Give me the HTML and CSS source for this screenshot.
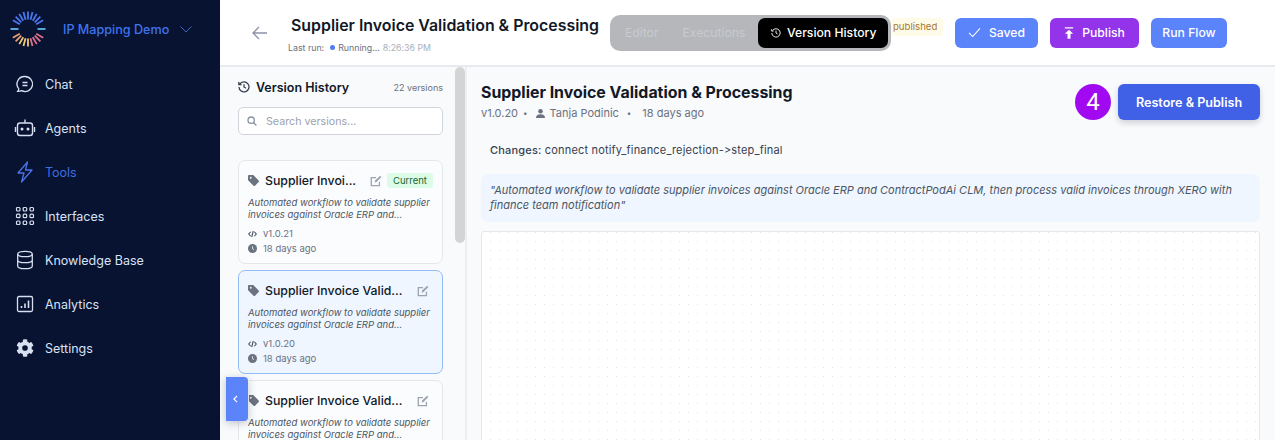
FILE: index.html
```html
<!DOCTYPE html>
<html lang="en">
<head>
<meta charset="utf-8">
<title>Version History</title>
<link rel="stylesheet" href="styles.css">
</head>
<body>
<div class="app">
  <aside class="sidebar">
    <div class="brand">
      <svg class="logo" viewBox="0 0 36 36" width="36" height="36" fill="none" stroke-width="1.800">
        <g stroke="#4a78f0">
          <path d="M18 .5v8"/>
          <path d="M18 .5v8" transform="rotate(15 18 18)"/>
          <path d="M18 .5v8" transform="rotate(30 18 18)"/>
          <path d="M18 .5v8" transform="rotate(45 18 18)"/>
          <path d="M18 .5v8" transform="rotate(60 18 18)"/>
          <path d="M18 .5v8" transform="rotate(-15 18 18)"/>
          <path d="M18 .5v8" transform="rotate(-30 18 18)"/>
          <path d="M18 .5v8" transform="rotate(-45 18 18)"/>
          <path d="M18 .5v8" transform="rotate(-60 18 18)"/>
        </g>
        <g stroke="#5fb6f0">
          <path d="M18 .5v8" transform="rotate(90 18 18)"/>
          <path d="M18 .5v8" transform="rotate(-90 18 18)"/>
        </g>
        <g stroke="#e8a07a">
          <path d="M18 .5v8" transform="rotate(-120 18 18)"/>
          <path d="M18 .5v8" transform="rotate(-135 18 18)"/>
        </g>
        <g stroke="#f0c878">
          <path d="M18 .5v8" transform="rotate(-150 18 18)"/>
          <path d="M18 .5v8" transform="rotate(-165 18 18)"/>
          <path d="M18 .5v8" transform="rotate(180 18 18)"/>
        </g>
        <g stroke="#e0708a">
          <path d="M18 .5v8" transform="rotate(165 18 18)"/>
          <path d="M18 .5v8" transform="rotate(150 18 18)"/>
          <path d="M18 .5v8" transform="rotate(135 18 18)"/>
          <path d="M18 .5v8" transform="rotate(120 18 18)"/>
        </g>
      </svg>
      <span class="brand-name">IP Mapping Demo</span>
      <svg class="chev" viewBox="0 0 12 7" width="12" height="7" fill="none" stroke="#3f63b8" stroke-width="1"><path d="M.5.5 6 6l5.500-5.500"/></svg>
    </div>
    <nav class="nav">
      <a class="nav-item"><svg viewBox="0 0 20 20" width="20" height="20" fill="none" stroke="#d7e0f0" stroke-width="1.300"><path d="M10 2.500a7.500 7.500 0 1 1-3.300 14.200c-1.300.6-2.700.8-4 .7.700-.8 1-1.700 1-2.700A7.500 7.500 0 0 1 10 2.500z"/><path d="M7.500 8.500h5M7.500 11.500h5"/></svg><span>Chat</span></a>
      <a class="nav-item"><svg viewBox="0 0 22 22" width="22" height="22" fill="none" stroke="#d7e0f0" stroke-width="1.400"><rect x="3.500" y="6" width="15" height="12.500" rx="2.500"/><path d="M11 6V2.500M1.500 10v5M20.500 10v5"/><circle cx="8" cy="12" r=".8" fill="#d7e0f0"/><circle cx="14" cy="12" r=".8" fill="#d7e0f0"/></svg><span>Agents</span></a>
      <a class="nav-item active"><svg viewBox="0 0 20 22" width="20" height="22" fill="none" stroke="#4a73e8" stroke-width="1.300" stroke-linejoin="round"><path d="M12.500 1 3 12h6l-2.500 9L17 9h-6.500z"/></svg><span>Tools</span></a>
      <a class="nav-item"><svg viewBox="0 0 20 20" width="20" height="20" fill="none" stroke="#d7e0f0" stroke-width="1.200"><rect x="1.500" y="1.500" width="3.500" height="3.500" rx="1"/><rect x="8.200" y="1.500" width="3.500" height="3.500" rx="1"/><rect x="15" y="1.500" width="3.500" height="3.500" rx="1"/><rect x="1.500" y="8.200" width="3.500" height="3.500" rx="1"/><rect x="8.200" y="8.200" width="3.500" height="3.500" rx="1"/><rect x="15" y="8.200" width="3.500" height="3.500" rx="1"/><rect x="1.500" y="15" width="3.500" height="3.500" rx="1"/><rect x="8.200" y="15" width="3.500" height="3.500" rx="1"/><rect x="15" y="15" width="3.500" height="3.500" rx="1"/></svg><span>Interfaces</span></a>
      <a class="nav-item"><svg viewBox="0 0 20 20" width="20" height="20" fill="none" stroke="#d7e0f0" stroke-width="1.300"><ellipse cx="10" cy="4" rx="7.300" ry="2.700"/><path d="M2.700 4v12c0 1.500 3.300 2.700 7.300 2.700s7.300-1.200 7.300-2.700V4M2.700 10c0 1.500 3.300 2.700 7.300 2.700s7.300-1.200 7.300-2.700"/></svg><span>Knowledge Base</span></a>
      <a class="nav-item"><svg viewBox="0 0 20 20" width="20" height="20" fill="none" stroke="#d7e0f0" stroke-width="1.300"><rect x="2.500" y="2.500" width="15" height="15" rx="1.500"/><path d="M6.500 14v-2M10 14V9.500M13.500 14V6.500" stroke-width="1.600"/></svg><span>Analytics</span></a>
      <a class="nav-item"><svg viewBox="0 0 512 512" width="18" height="18" fill="#d7e0f0"><path d="M487 316l-42-25a190 190 0 0 0 0-70l42-25c5-3 7-9 6-14-11-35-30-67-54-93-4-4-10-5-15-2l-42 24a188 188 0 0 0-61-35V28c0-6-4-11-9-12a224 224 0 0 0-108 0c-5 1-9 6-9 12v48c-23 8-43 20-61 35L92 87c-5-3-11-2-15 2-24 26-43 58-54 93-2 5 1 11 6 14l42 25a190 190 0 0 0 0 70l-42 25c-5 3-7 9-6 14 11 35 30 67 54 93 4 4 10 5 15 2l42-24c18 15 38 27 61 35v48c0 6 4 11 9 12 36 8 73 8 108 0 5-1 9-6 9-12v-48c23-8 43-20 61-35l42 24c5 3 11 2 15-2 24-26 43-58 54-93 2-5-1-11-6-14zM256 336a80 80 0 1 1 0-160 80 80 0 0 1 0 160z"/></svg><span>Settings</span></a>
    </nav>
  </aside>
  <div class="content">
    <header class="topbar">
      <svg class="back" viewBox="0 0 16 14" width="16" height="14" fill="none" stroke="#8a92a6" stroke-width="1.300"><path d="M15 7H1.500M7 1 1 7l6 6"/></svg>
      <div class="title-block">
        <h1>Supplier Invoice Validation &amp; Processing</h1>
        <div class="last-run"><span>Last run:</span><i class="dot"></i><span>Running...</span><span class="time">8:26:36 PM</span></div>
      </div>
      <div class="tabs">
        <span class="tab">Editor</span>
        <span class="tab">Executions</span>
        <span class="tab tab-on"><svg viewBox="0 0 12 12" width="10" height="10" fill="none" stroke="#fff" stroke-width="1.100"><path d="M1.800 3.200A5 5 0 1 1 1 6M.8 1.500v2.200H3M6 3.200V6l2 1.200"/></svg>Version History</span>
      </div>
      <span class="pub-badge">published</span>
      <div class="actions">
        <button class="btn blue saved"><svg viewBox="0 0 14 12" width="13" height="11" fill="none" stroke="#fff" stroke-width="1.100"><path d="M1 6.500 5 10.500 13 1.500"/></svg>Saved</button>
        <button class="btn purple publish"><svg viewBox="0 0 12 14" width="10" height="12" fill="#fff"><path d="M1 0h10v1.600H1zM6 3l5 5H7.800v6H4.200V8H1z"/></svg>Publish</button>
        <button class="btn blue run">Run Flow</button>
      </div>
    </header>
    <div class="body">
      <section class="history">
        <div class="history-inner">
          <div class="history-head">
            <h2><svg viewBox="0 0 12 12" width="12" height="12" fill="none" stroke="#374151" stroke-width="1.300"><path d="M1.800 3.200A5 5 0 1 1 1 6M.8 1v2.700H3.500M6 3.200V6l2 1.200"/></svg>Version History</h2>
            <span class="count">22 versions</span>
          </div>
          <div class="search">
            <svg viewBox="0 0 12 12" width="10" height="10" fill="none" stroke="#8b93a3" stroke-width="1.600"><circle cx="5" cy="5" r="3.800"/><path d="m8 8 3.300 3.300"/></svg>
            <span>Search versions...</span>
          </div>
          <div class="cards">
            <article class="card">
              <div class="card-top">
                <svg class="tag" viewBox="0 0 12 12" width="11" height="11" fill="#6b7280"><path d="M0 1.200C0 .5.500 0 1.200 0h4c.3 0 .6.100.8.400l5.600 5.600c.5.500.5 1.200 0 1.700l-3.900 3.900c-.5.500-1.200.5-1.700 0L.4 6C.1 5.800 0 5.500 0 5.200zM3 4a1 1 0 1 0 0-2 1 1 0 0 0 0 2z"/></svg>
                <span class="card-title short">Supplier Invoi...</span>
                <svg class="edit" viewBox="0 0 14 14" width="12" height="12" fill="none" stroke="#9ca3af" stroke-width="1.500"><path d="M11 8v4.500H1.500V3H7"/><path d="M5.500 9 6 6.500 11.800 .9l1.500 1.500L7.600 8.300z" fill="#9ca3af" stroke="none"/></svg>
                <span class="current">Current</span>
              </div>
              <p class="desc">Automated workflow to validate supplier invoices against Oracle ERP and...</p>
              <div class="meta"><svg viewBox="0 0 12 10" width="9" height="8" fill="none" stroke="#4b5563" stroke-width="1.500"><path d="M3.500 2 1 5l2.500 3M8.500 2 11 5 8.500 8M7 1 5 9"/></svg><span>v1.0.21</span></div>
              <div class="meta"><svg viewBox="0 0 12 12" width="9" height="9"><circle cx="6" cy="6" r="6" fill="#6b7280"/><path d="M6 3v3.300l2 1.200" fill="none" stroke="#fbfcfe" stroke-width="1.100"/></svg><span>18 days ago</span></div>
            </article>
            <article class="card selected">
              <div class="card-top">
                <svg class="tag" viewBox="0 0 12 12" width="11" height="11" fill="#6b7280"><path d="M0 1.200C0 .5.500 0 1.200 0h4c.3 0 .6.100.8.400l5.600 5.600c.5.500.5 1.200 0 1.700l-3.900 3.900c-.5.500-1.200.5-1.700 0L.4 6C.1 5.800 0 5.500 0 5.200zM3 4a1 1 0 1 0 0-2 1 1 0 0 0 0 2z"/></svg>
                <span class="card-title">Supplier Invoice Valid...</span>
                <svg class="edit" viewBox="0 0 14 14" width="12" height="12" fill="none" stroke="#9ca3af" stroke-width="1.500"><path d="M11 8v4.500H1.500V3H7"/><path d="M5.500 9 6 6.500 11.800 .9l1.500 1.500L7.600 8.300z" fill="#9ca3af" stroke="none"/></svg>
              </div>
              <p class="desc">Automated workflow to validate supplier invoices against Oracle ERP and...</p>
              <div class="meta"><svg viewBox="0 0 12 10" width="9" height="8" fill="none" stroke="#4b5563" stroke-width="1.500"><path d="M3.500 2 1 5l2.500 3M8.500 2 11 5 8.500 8M7 1 5 9"/></svg><span>v1.0.20</span></div>
              <div class="meta"><svg viewBox="0 0 12 12" width="9" height="9"><circle cx="6" cy="6" r="6" fill="#6b7280"/><path d="M6 3v3.300l2 1.200" fill="none" stroke="#eff6ff" stroke-width="1.100"/></svg><span>18 days ago</span></div>
            </article>
            <article class="card">
              <div class="card-top">
                <svg class="tag" viewBox="0 0 12 12" width="11" height="11" fill="#6b7280"><path d="M0 1.200C0 .5.500 0 1.200 0h4c.3 0 .6.100.8.400l5.600 5.600c.5.500.5 1.200 0 1.700l-3.900 3.900c-.5.500-1.200.5-1.700 0L.4 6C.1 5.800 0 5.500 0 5.200zM3 4a1 1 0 1 0 0-2 1 1 0 0 0 0 2z"/></svg>
                <span class="card-title">Supplier Invoice Valid...</span>
                <svg class="edit" viewBox="0 0 14 14" width="12" height="12" fill="none" stroke="#9ca3af" stroke-width="1.500"><path d="M11 8v4.500H1.500V3H7"/><path d="M5.500 9 6 6.500 11.800 .9l1.500 1.500L7.600 8.300z" fill="#9ca3af" stroke="none"/></svg>
              </div>
              <p class="desc">Automated workflow to validate supplier invoices against Oracle ERP and...</p>
            </article>
          </div>
        </div>
        <div class="scrollbar"><div class="thumb"></div></div>
      </section>
      <main class="detail">
        <div class="detail-head">
          <div>
            <h2 class="detail-title">Supplier Invoice Validation &amp; Processing</h2>
            <div class="detail-meta"><span class="ver">v1.0.20</span><b>•</b><svg viewBox="0 0 12 12" width="9" height="9" fill="#6b7280"><circle cx="6" cy="3" r="3"/><path d="M0 12c0-3.500 2-5 6-5s6 1.500 6 5z"/></svg><span>Tanja Podinic</span><b>•</b><span>18 days ago</span></div>
          </div>
          <div class="restore-wrap">
            <span class="step">4</span>
            <button class="restore">Restore &amp; Publish</button>
          </div>
        </div>
        <p class="changes"><strong>Changes:</strong> connect notify_finance_rejection-&gt;step_final</p>
        <div class="quote">"Automated workflow to validate supplier invoices against Oracle ERP and ContractPodAi CLM, then process valid invoices through XERO with finance team notification"</div>
        <div class="canvas"></div>
      </main>
    </div>
  </div>
</div>
<button class="collapse" aria-label="Collapse"><svg viewBox="0 0 6 10" width="5" height="8" fill="none" stroke="#fff" stroke-width="1.500"><path d="M5 1 1 5l4 4"/></svg></button>
</body>
</html>
```
FILE: styles.css
```css
* { box-sizing: border-box; }
html, body { margin: 0; height: 100%; overflow: hidden; }
body { font-family: Inter, "Noto Sans", sans-serif; color: #111827; background: #fff; font-variant-ligatures: none; font-feature-settings: "calt" 0; }
h1, h2, p { margin: 0; }
button { font: inherit; border: 0; }

.app { display: flex; height: 440px; }

.sidebar { width: 220px; flex: none; background: #081231; }
.brand { display: flex; align-items: center; height: 62px; padding: 0 0 4px 10px; }
.logo { flex: none; }
.brand-name { margin-left: 17px; font-size: 12.600px; font-weight: 500; color: #3e74ee; width: 110px; white-space: nowrap; }
.chev { margin-left: 7px; }
.nav { display: flex; flex-direction: column; }
.nav-item { display: flex; align-items: center; height: 44px; color: #d7e3f7; font-size: 12.500px; }
.nav-item svg { width: 22px; margin-left: 14px; margin-right: 9px; flex: none; }
.nav-item.active { color: #3e6fe0; }

.content { flex: 1; min-width: 0; display: flex; flex-direction: column; }
.topbar { height: 67px; flex: none; display: flex; align-items: center; border-bottom: 2px solid #e8eaef; padding-left: 32px; background: #fff; }
.back { flex: none; }
.title-block { margin-left: 23px; width: 317px; flex: none; padding-top: 2px; }
.topbar h1 { font-size: 15.900px; font-weight: 600; line-height: 22px; color: #111827; white-space: nowrap; }
.last-run { display: flex; align-items: center; font-size: 8.800px; color: #6b7280; margin: 5px 0 0 -3px; white-space: nowrap; }
.dot { width: 5px; height: 5px; border-radius: 50%; background: #4f7cf6; margin: 0 3px 0 6px; }
.time { color: #a9afba; margin-left: 3px; }

.tabs { display: flex; align-items: center; flex: none; width: 281px; height: 36px; margin-left: 2px; padding: 3px; background: #b5b7bb; border-radius: 10px; }
.tab { font-size: 12.200px; color: #c8cad0; padding: 0 0 0 12px; margin-right: 12px; }
.tab-on { display: flex; align-items: center; gap: 6px; height: 30px; width: 130px; margin: 0 0 0 auto; padding: 0 0 0 13px; background: #000; color: #fff; border-radius: 7px; font-weight: 500; }
.pub-badge { align-self: flex-start; margin-top: 18px; height: 18px; width: 52px; padding-left: 2px; font-size: 9.600px; line-height: 17px; color: #a9742f; background: #fefce8; border-radius: 3px; flex: none; }
.actions { display: flex; gap: 12px; margin-left: 12px; align-items: center; }
.btn { display: flex; align-items: center; justify-content: center; gap: 8px; height: 30px; border-radius: 6px; color: #fff; font-size: 12.200px; font-weight: 500; padding: 0; }
.btn svg { flex: none; }
.btn.blue { background: #5b84fb; }
.btn.purple { background: #9333ea; }
.saved { width: 83px; }
.publish { width: 89px; }
.run { width: 76px; }

.body { flex: 1; display: flex; min-height: 0; background: #f8fafc; }
.history { width: 247px; flex: none; display: flex; overflow: hidden; border-right: 2px solid #eceef2; }
.history-inner { width: 235px; flex: none; padding: 0 12px 0 18px; }
.history-head { display: flex; align-items: center; justify-content: space-between; height: 40px; }
.history-head h2 { display: flex; align-items: center; gap: 6px; font-size: 12.500px; font-weight: 600; color: #111827; }
.count { font-size: 9px; color: #6b7280; white-space: nowrap; }
.search { display: flex; align-items: center; gap: 9px; height: 28px; padding-left: 8px; border: 1px solid #d1d5db; border-radius: 5px; background: #fff; font-size: 10.700px; color: #9ca3af; }
.cards { display: flex; flex-direction: column; gap: 6px; margin-top: 25px; }
.card { height: 104px; flex: none; padding: 12px 9px 0; background: #fbfcfe; border: 1px solid #e5e7eb; border-radius: 7px; }
.card.selected { background: #eff6ff; border-color: #93bbf7; }
.card-top { display: flex; align-items: center; height: 15px; }
.tag { flex: none; }
.card-title { margin-left: 6px; flex: 1; font-size: 12.300px; font-weight: 500; color: #111827; white-space: nowrap; overflow: hidden; }
.card-title.short { flex: none; width: 97px; }
.edit { flex: none; margin-right: 4px; margin-left: 4px; }
.card-title.short + .edit { margin: 0 5px 0 8px; }
.current { flex: none; font-size: 9.500px; color: #166534; background: #dcfce7; padding: 0 6px; height: 15px; line-height: 15px; border-radius: 3px; }
.desc { margin-top: 9px; font-size: 9.500px; line-height: 12px; font-style: italic; color: #4b5563; height: 24px; white-space: normal; }
.meta { display: flex; align-items: center; gap: 6px; font-size: 9.500px; color: #6b7280; height: 15px; }
.card .desc + .meta { margin-top: 5px; }
.scrollbar { width: 10px; flex: none; }
.thumb { width: 10px; height: 176px; background: #d4d4d4; border-radius: 5px; }

.detail { flex: 1; min-width: 0; padding: 0 15px 0 14px; }
.detail-head { display: flex; justify-content: space-between; padding-top: 17px; height: 64px; }
.detail-title { font-size: 15.900px; font-weight: 700; line-height: 20px; color: #111827; white-space: nowrap; margin-top: -1px; }
.detail-meta { display: flex; align-items: center; gap: 5px; font-size: 11px; color: #6b7280; margin-top: 3px; }
.detail-meta b { font-weight: 400; margin: 0 3px; font-size: 8px; }
.detail-meta b:last-of-type { margin-right: 6px; }
.ver { margin-right: -3px; }
.restore-wrap { display: flex; align-items: flex-start; gap: 7px; }
.step { width: 36px; height: 36px; border-radius: 50%; background: #a10af0; color: #fff; font: 400 24px/36px Roboto, sans-serif; text-align: center; }
.restore { width: 142px; height: 36px; border-radius: 6px; background: #4060e6; color: #fff; font-size: 12.600px; font-weight: 600; box-shadow: 0 3px 6px rgba(15,23,42,.18); }
.changes { margin: 11px 0 0 9px; font-size: 11px; line-height: 16px; color: #374151; letter-spacing: .18px; }
.changes strong { font-weight: 500; }
.quote { margin-top: 16px; height: 48px; padding: 9px 9px 0; background: #eff6ff; border-radius: 7px; font-size: 11px; line-height: 15px; font-style: italic; color: #4b5563; }
.canvas { margin-top: 9px; height: 300px; border: 1px solid #e5e7eb; border-radius: 3px; background-color: #fff; background-image: radial-gradient(circle, #dfe1e6 .6px, transparent .9px); background-size: 9px 9px; background-position: 4px -4px; }

.collapse { position: absolute; left: 226px; top: 377px; width: 22px; height: 44px; display: flex; align-items: center; justify-content: center; padding: 0 4px 0 0; background: #5b84fb; border-radius: 0 4px 4px 0; box-shadow: 0 2px 8px rgba(15,23,42,.25), 1px 0 0 #fff; }
```
